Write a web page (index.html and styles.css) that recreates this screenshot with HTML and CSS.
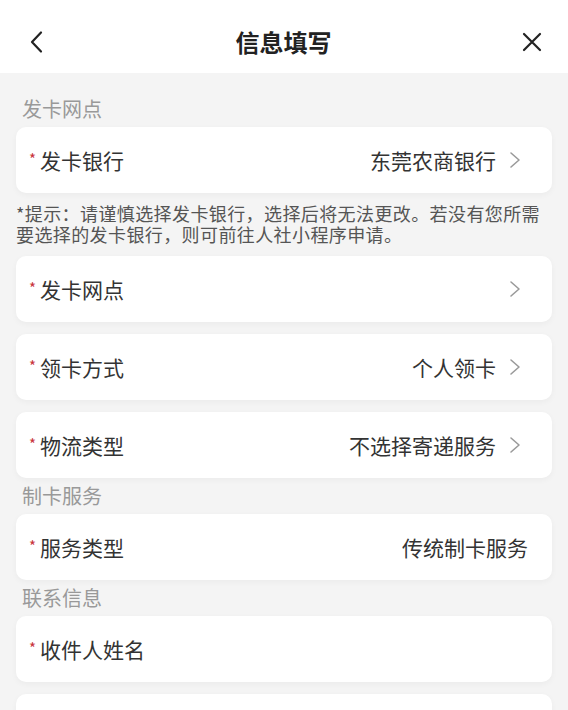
FILE: index.html
```html
<!DOCTYPE html>
<html lang="zh-CN">
<head>
<meta charset="utf-8">
<title>信息填写</title>
<link rel="stylesheet" href="styles.css">
</head>
<body>
<div class="page">
  <header class="nav">
    <svg class="nav-icon back" viewBox="0 0 20 24" width="20" height="24"><polyline points="14,2.5 5,12 14,21.5" fill="none" stroke="#222" stroke-width="2.2" stroke-linecap="round" stroke-linejoin="round"/></svg>
    <h1 class="nav-title">信息填写</h1>
    <svg class="nav-icon close" viewBox="0 0 24 24" width="24" height="24"><path d="M4 4 L20 20 M20 4 L4 20" fill="none" stroke="#222" stroke-width="2.2" stroke-linecap="round"/></svg>
  </header>

  <main class="content">
    <div class="section-label first">发卡网点</div>
    <div class="card">
      <span class="label"><i class="req">*</i>发卡银行</span>
      <span class="value">东莞农商银行</span>
      <svg class="chev" viewBox="0 0 12 20" width="12" height="20"><polyline points="2,3 10,10 2,17" fill="none" stroke="#9a9a9a" stroke-width="1.6" stroke-linecap="round" stroke-linejoin="round"/></svg>
    </div>
    <p class="hint">*提示：请谨慎选择发卡银行，选择后将无法更改。若没有您所需要选择的发卡银行，则可前往人社小程序申请。</p>
    <div class="card">
      <span class="label"><i class="req">*</i>发卡网点</span>
      <span class="value"></span>
      <svg class="chev" viewBox="0 0 12 20" width="12" height="20"><polyline points="2,3 10,10 2,17" fill="none" stroke="#9a9a9a" stroke-width="1.6" stroke-linecap="round" stroke-linejoin="round"/></svg>
    </div>
    <div class="card gap">
      <span class="label"><i class="req">*</i>领卡方式</span>
      <span class="value">个人领卡</span>
      <svg class="chev" viewBox="0 0 12 20" width="12" height="20"><polyline points="2,3 10,10 2,17" fill="none" stroke="#9a9a9a" stroke-width="1.6" stroke-linecap="round" stroke-linejoin="round"/></svg>
    </div>
    <div class="card gap">
      <span class="label"><i class="req">*</i>物流类型</span>
      <span class="value">不选择寄递服务</span>
      <svg class="chev" viewBox="0 0 12 20" width="12" height="20"><polyline points="2,3 10,10 2,17" fill="none" stroke="#9a9a9a" stroke-width="1.6" stroke-linecap="round" stroke-linejoin="round"/></svg>
    </div>

    <div class="section-label">制卡服务</div>
    <div class="card">
      <span class="label"><i class="req">*</i>服务类型</span>
      <span class="value plain">传统制卡服务</span>
    </div>

    <div class="section-label">联系信息</div>
    <div class="card">
      <span class="label"><i class="req">*</i>收件人姓名</span>
    </div>
    <div class="card gap"></div>
  </main>
</div>
</body>
</html>
```

FILE: styles.css
```css
* {
  box-sizing: border-box;
}

html, body {
  margin: 0;
  padding: 0;
  height: 100%;
}

body {
  background: #f4f4f4;
  font-family: "Noto Sans CJK SC", "Noto Sans", sans-serif;
  color: #333;
  overflow: hidden;
}

.page {
  width: 568px;
  height: 710px;
  overflow: hidden;
}

.nav {
  height: 73px;
  background: #fff;
  display: flex;
  align-items: center;
  justify-content: space-between;
  padding: 10px 24px 0 27px;
}

.nav-title {
  margin: 0;
  font-size: 24px;
  font-weight: 600;
  color: #222;
  line-height: 1;
}

.nav-icon {
  display: block;
}

.content {
  padding: 18px 16px 0;
}

.section-label {
  height: 36px;
  line-height: 36px;
  font-size: 20px;
  color: #999;
  padding-left: 6px;
}

.card {
  height: 66px;
  background: #fff;
  border-radius: 10px;
  box-shadow: 0 2px 6px rgba(0, 0, 0, 0.04);
  display: flex;
  align-items: center;
  padding: 0 24px 0 12px;
  font-size: 21px;
}

.card.gap {
  margin-top: 12px;
}

.label {
  flex: 1;
  display: flex;
  align-items: center;
  color: #333;
}

.req {
  font-style: normal;
  color: #c8333a;
  font-size: 15px;
  width: 12px;
  padding-left: 1px;
  margin-top: -4px;
}

.value {
  color: #333;
}

.chev {
  display: block;
  margin-left: 13px;
  margin-right: 7px;
}

.hint {
  margin: 0;
  padding: 10px 0 11px;
  font-size: 18px;
  line-height: 21px;
  letter-spacing: 0.4px;
  color: #555;
}
```
